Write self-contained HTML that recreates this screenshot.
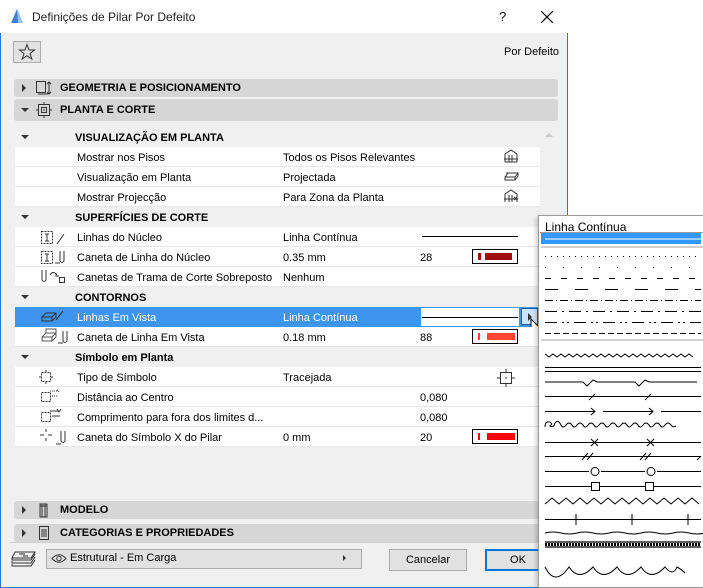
<!DOCTYPE html>
<html><head><meta charset="utf-8"><style>
*{margin:0;padding:0;box-sizing:border-box}
body{width:703px;height:588px;overflow:hidden;background:#fff;font-family:"Liberation Sans",sans-serif;font-size:11px;color:#000;position:relative}
.a{position:absolute}
.dlg{left:0;top:0;width:568px;height:588px;background:#f0f0f0;border:1px solid #2b78d4;border-top:none}
.title{left:0;top:0;width:568px;height:33px;background:#fff}
.bar{background:#d6d6d6;border-radius:3px;height:18px;left:14px;width:544px}
.bar b{position:absolute;left:46px;top:3px;font-size:11px}
.tri{position:absolute;width:0;height:0}
.tr{border-top:4px solid transparent;border-bottom:4px solid transparent;border-left:4px solid #333}
.td{border-left:4px solid transparent;border-right:4px solid transparent;border-top:4px solid #333}
.row{position:absolute;left:15px;width:525px;height:20px;background:#fff;border-bottom:1px solid #e6e6e6}
.sub{background:#f0f0f0;border-bottom:none}
.row span{position:absolute;top:5px}
.l{left:62px}.v{left:268px}.n{left:405px}
.sub b{position:absolute;left:60px;top:5px}
.sw{position:absolute;left:457px;top:2px;width:46px;height:15px;border:1px solid #000;background:#fff}
.sw i{position:absolute;top:3px;height:7px}
</style></head><body>
<div class="a dlg"></div>
<div class="a title"></div>
<svg class="a" style="left:10px;top:8px" width="14" height="16"><path d="M1 15 L7 1 L13 15 Z" fill="#3d7fd6"/><path d="M7 1 L13 15 L8 15 Z" fill="#9cc2f0"/></svg>
<div class="a" style="left:32px;top:10px;font-size:12px;color:#222">Definições de Pilar Por Defeito</div>
<div class="a" style="left:499px;top:9px;font-size:13px">?</div>
<svg class="a" style="left:541px;top:11px" width="12" height="12"><path d="M0 0L12 12M12 0L0 12" stroke="#000" stroke-width="1.2"/></svg>
<div class="a" style="left:13px;top:41px;width:28px;height:22px;border:1px solid #adadad;background:#e1e1e1"></div>
<svg class="a" style="left:18px;top:43px" width="18" height="18"><path d="M9 1.5 L11 7 L16.5 7 L12 10.5 L13.8 16 L9 12.7 L4.2 16 L6 10.5 L1.5 7 L7 7 Z" fill="none" stroke="#333"/></svg>
<div class="a" style="left:504px;top:46px">Por Defeito</div>

<div class="a bar" style="top:79px"><div class="tri tr" style="left:8px;top:5px"></div>
<svg class="a" style="left:21px;top:1px" width="24" height="16"><rect x="1.5" y="1.5" width="9" height="11" fill="none" stroke="#333"/><path d="M3 14h10M14 2v12M12 4l2-2 2 2M12 12l2 2 2-2" stroke="#333" fill="none"/></svg><b>GEOMETRIA E POSICIONAMENTO</b></div>
<div class="a bar" style="top:99px;height:22px"><div class="tri td" style="left:7px;top:9px"></div>
<svg class="a" style="left:22px;top:3px" width="16" height="16"><rect x="2.5" y="2.5" width="11" height="11" fill="none" stroke="#333"/><rect x="5.5" y="5.5" width="5" height="5" fill="none" stroke="#333"/><path d="M8 0v3M8 13v3M0 8h3M13 8h3M7 8h2" stroke="#333"/></svg><b style="top:5px">PLANTA E CORTE</b></div>

<div class="a" style="left:540px;top:127px;width:17px;height:320px;background:#f0f0f0"></div>
<div class="a" style="left:545px;top:133px;border-left:4px solid transparent;border-right:4px solid transparent;border-bottom:4px solid #c8c8c8"></div>
<div class="a" style="left:15px;top:147px;width:525px;height:300px;background:#fff"></div>

<div class="row sub" style="top:127px"><div class="tri td" style="left:6px;top:8px"></div><b>VISUALIZAÇÃO EM PLANTA</b></div>
<div class="row" style="top:147px"><span class="l">Mostrar nos Pisos</span><span class="v">Todos os Pisos Relevantes</span></div>
<div class="row" style="top:167px"><span class="l">Visualização em Planta</span><span class="v">Projectada</span></div>
<div class="row" style="top:187px"><span class="l">Mostrar Projecção</span><span class="v">Para Zona da Planta</span></div>
<svg class="a" style="left:503px;top:149px" width="16" height="56" fill="none" stroke="#333"><path d="M2 13V5L8 1L14 5V13M1 10h14M6 6v7M9 6v7M2 13h12"/><path d="M2 28l3-4h10v3l-3 4H2z M2 28h10v3M12 28l3-4" /><path d="M3 24h10" stroke-dasharray="2 1"/><path d="M2 53V45L8 41L14 45V53M1 50h14M6 46v7M9 46v7M11 48l3 3M11 51l3-3"/></svg>

<div class="row sub" style="top:207px"><div class="tri td" style="left:6px;top:8px"></div><b>SUPERFÍCIES DE CORTE</b></div>
<div class="row" style="top:227px"><span class="l">Linhas do Núcleo</span><span class="v">Linha Contínua</span><div class="a" style="left:407px;top:9px;width:96px;height:1px;background:#000"></div></div>
<div class="row" style="top:247px"><span class="l">Caneta de Linha do Núcleo</span><span class="v">0.35 mm</span><span class="n">28</span><div class="sw"><i style="left:5px;width:3px;background:#a00f0f"></i><i style="left:12px;width:27px;background:#a00f0f"></i></div></div>
<div class="row" style="top:267px"><span class="l">Canetas de Trama de Corte Sobreposto</span><span class="v">Nenhum</span></div>
<svg class="a" style="left:40px;top:229px" width="30" height="56" fill="none" stroke="#333"><rect x="1.5" y="2.5" width="11" height="12" stroke-dasharray="2 1"/><path d="M5 5h4M7 5v7M5 12h4M17 15l7-10"/><rect x="1.5" y="22.5" width="11" height="12" stroke-dasharray="2 1"/><path d="M5 25h4M7 25v7M5 32h4M15 34h5M20 22v10q2 3 4 0V22"/><path d="M2 41v10q2 3 4 0V41M10 46q3-5 7 0M16 44v3h3"/><rect x="19.5" y="48.5" width="5" height="5"/></svg>

<div class="row sub" style="top:287px"><div class="tri td" style="left:6px;top:8px"></div><b>CONTORNOS</b></div>
<div class="row" style="top:307px;background:#3e95ef;color:#fff;border:none"><span class="l">Linhas Em Vista</span><span class="v">Linha Contínua</span>
<div class="a" style="left:405px;top:0;width:100px;height:20px;background:#fff;border:1px solid #3e95ef"></div><div class="a" style="left:407px;top:10px;width:96px;height:1px;background:#000"></div></div>
<div class="a" style="left:521px;top:308px;width:17px;height:17px;background:#cce4f7;border:1px solid #1a5fb0"></div>
<div class="a" style="left:528px;top:313px;border-top:4px solid transparent;border-bottom:4px solid transparent;border-left:4px solid #333"></div>
<svg class="a" style="left:530px;top:318px" width="14" height="22"><path d="M1 1V17L5 13L8 20L10 19L7 12H12Z" fill="#fff" stroke="#000"/></svg>
<div class="row" style="top:327px"><span class="l">Caneta de Linha Em Vista</span><span class="v">0.18 mm</span><span class="n">88</span><div class="sw"><i style="left:5px;width:2px;background:#ff4433"></i><i style="left:14px;width:28px;background:#ff4433"></i></div></div>
<svg class="a" style="left:40px;top:309px" width="30" height="36" fill="none" stroke="#333"><path d="M2 8l4-4h10v4l-4 4H2zM2 8h10v4M12 8l4-4" fill="#3e95ef"/><path d="M16 11l7-9" stroke="#222"/><path d="M2 28l4-4h10v4l-4 4H2zM2 28h10v4M12 28l4-4M6 24V20h10v4" stroke="#555"/><path d="M18 34h5M23 22v10q2 3 4 0V22"/></svg>

<div class="row sub" style="top:347px"><div class="tri td" style="left:6px;top:8px"></div><b style="text-transform:none">Símbolo em Planta</b></div>
<div class="row" style="top:367px"><span class="l">Tipo de Símbolo</span><span class="v">Tracejada</span></div>
<div class="row" style="top:387px"><span class="l">Distância ao Centro</span><span class="v" style="left:405px">0,080</span></div>
<div class="row" style="top:407px"><span class="l">Comprimento para fora dos limites d...</span><span class="v" style="left:405px">0,080</span></div>
<div class="row" style="top:427px"><span class="l">Caneta do Símbolo X do Pilar</span><span class="v">0 mm</span><span class="n">20</span><div class="sw"><i style="left:5px;width:2px;background:#f00"></i><i style="left:14px;width:28px;background:#f00"></i></div></div>
<svg class="a" style="left:497px;top:369px" width="18" height="18" fill="none" stroke="#333"><rect x="3.5" y="3.5" width="11" height="11"/><path d="M9 0v4M9 14v4M0 9h4M14 9h4M8 9h2"/></svg>
<svg class="a" style="left:38px;top:369px" width="30" height="78" fill="none" stroke="#333"><rect x="3.5" y="3.5" width="9" height="9" stroke-dasharray="2 1"/><path d="M8 1v3M8 12v3M1 8h3M12 8h3"/><rect x="3.5" y="23.5" width="9" height="9" stroke-dasharray="2 1"/><path d="M12 22h8M14 27h6M19 21l2 2" stroke-dasharray="1 1"/><rect x="3.5" y="43.5" width="9" height="9" stroke-dasharray="2 1"/><path d="M12 42h8M19 40l2 3 2-3M14 47h8"/><path d="M2 66h4M10 66h4M8 60v3M8 69v3M18 75h5M23 62v10q2 3 4 0V62"/></svg>

<div class="a bar" style="top:501px"><div class="tri tr" style="left:8px;top:5px"></div>
<svg class="a" style="left:24px;top:1px" width="12" height="16" fill="none" stroke="#333"><path d="M2 2h7v13H2zM4 2v13M7 2v13M2 4h7"/></svg><b>MODELO</b></div>
<div class="a bar" style="top:524px"><div class="tri tr" style="left:8px;top:5px"></div>
<svg class="a" style="left:24px;top:1px" width="12" height="16" fill="none" stroke="#333"><rect x="1.5" y="1.5" width="9" height="13"/><path d="M3 5h6M3 7h6M3 9h6M3 11h6"/></svg><b>CATEGORIAS E PROPRIEDADES</b></div>
<div class="a" style="left:10px;top:542px;width:557px;height:1px;background:#d0d0d0"></div>

<svg class="a" style="left:11px;top:550px" width="26" height="18" fill="none" stroke="#333"><path d="M4 2h20l-4 6H1zM1 8v2h19l4-6M1 11v2h19l4-6M1 14v2h19l4-6"/><path d="M8 4h6M12 6h5"/></svg>
<div class="a" style="left:46px;top:549px;width:316px;height:20px;background:#e1e1e1;border:1px solid #adadad"></div>
<svg class="a" style="left:51px;top:553px" width="16" height="11" fill="none" stroke="#333"><path d="M1 5.5Q8 -2 15 5.5Q8 13 1 5.5Z"/><circle cx="8" cy="5.5" r="2.2"/></svg>
<div class="a" style="left:70px;top:552px">Estrutural - Em Carga</div>
<div class="a" style="left:343px;top:555px;border-top:3px solid transparent;border-bottom:3px solid transparent;border-left:3px solid #333"></div>
<div class="a" style="left:389px;top:549px;width:78px;height:22px;background:#e1e1e1;border:1px solid #adadad;text-align:center;line-height:20px">Cancelar</div>
<div class="a" style="left:485px;top:549px;width:78px;height:22px;background:#e1e1e1;border:2px solid #0078d7;text-align:center;line-height:18px;text-indent:-12px">OK</div>

<div class="a" style="left:538px;top:215px;width:165px;height:373px;background:#fff;border:1px solid #9a9a9a;border-right:none;box-shadow:-2px 2px 4px rgba(0,0,0,.2)"></div>
<div class="a" style="left:545px;top:220px;font-size:12px">Linha Contínua</div>
<div class="a" style="left:540px;top:232px;width:163px;height:1px;background:#9a9a9a"></div>
<div class="a" style="left:541px;top:233px;width:160px;height:11px;background:#3399ff"></div>
<svg class="a" style="left:539px;top:232px" width="164" height="356" fill="none" stroke="#000" stroke-width="1">
<path d="M6 7h156" stroke="#fff"/>
<path d="M2 15h162M2 108h162" stroke="#a0a0a0"/>
<path d="M6 24.5h156" stroke-dasharray="1 5"/>
<path d="M6 35.5h156" stroke-dasharray="1 17"/>
<path d="M6 46.5h156" stroke-dasharray="6 10"/>
<path d="M6 57.5h156" stroke-dasharray="13 17"/>
<path d="M6 68.5h156" stroke-dasharray="8 3 1 3"/>
<path d="M6 79.5h156" stroke-dasharray="12 5 2 5"/>
<path d="M6 90.5h156" stroke-dasharray="12 5 2 3 2 5"/>
<path d="M6 101.5h156" stroke-dasharray="6 3"/>
<path d="M6 122l4 3 4-3 4 3 4-3 4 3 4-3 4 3 4-3 4 3 4-3 4 3 4-3 4 3 4-3 4 3 4-3 4 3 4-3 4 3 4-3 4 3 4-3 4 3 4-3 4 3 4-3 4 3 4-3 4 3 4-3 4 3 4-3 4 3 4-3 4 3 4-3 4 3"/>
<path d="M6 135.5h156M6 139.5h156"/>
<path d="M6 150h38l4 4 6-6 4 2h38l4 4 6-6 4 2h48"/>
<path d="M6 164.5h156M50 168l6-6M106 168l6-6"/>
<path d="M6 179.5h50M52 176l4 3.5-4 3.5M64 179.5h50M110 176l4 3.5-4 3.5M122 179.5h40"/>
<path d="M6 195q0-6 5-5q3 2 0 4q4 2 5-3q3-4 6 2q2 4 5 0q3-4 6 0q2 4 5 0q3-4 6 0q2 4 5 0q3-4 6 0q2 4 5 0q3-4 6 0q2 4 5 0q3-4 6 0q2 4 5 0q3-4 6 0q2 4 5 0q3-4 6 0q2 4 5 0q3-4 6 0q2 4 5 0q3-4 6 0q2 4 5 0q3-4 6 0q2 3 5 1"/>
<path d="M6 210.5h156M52 207l7 7M59 207l-7 7M108 207l7 7M115 207l-7 7"/>
<path d="M6 224.5h156M43 228l6-7M48 228l6-7M101 228l6-7M106 228l6-7M158 228l4-4"/>
<path d="M6 239.5h44M62 239.5h44M118 239.5h44"/><circle cx="56" cy="239.5" r="4"/><circle cx="112" cy="239.5" r="4"/>
<path d="M6 254.5h46M60 254.5h46M114 254.5h48"/><rect x="52.5" y="250.5" width="8" height="8"/><rect x="106.5" y="250.5" width="8" height="8"/>
<path d="M6 272l7-6 7 6 7-6 7 6 7-6 7 6 7-6 7 6 7-6 7 6 7-6 7 6 7-6 7 6 7-6 7 6 7-6 7 6 7-6 7 6 7-6 7 6"/>
<path d="M6 287.5h156M37 282v11M93 282v11M149 282v11"/>
<path d="M6 301q8-2 16 0t16 0 16 0 16 0 16 0 16 0 16 0 16 0 16 0 16 0" />
<path d="M6 310h156M6 315h156" stroke-width="1.2"/><path d="M6 312.5h156" stroke-width="3" stroke-dasharray="2 1"/>
<path d="M6 335q10 20 24 0q10 15 24 0q10 15 24 0q10 15 24 0q10 15 24 0q8 10 12 0q4 2 8 6"/>
</svg>
</body></html>
